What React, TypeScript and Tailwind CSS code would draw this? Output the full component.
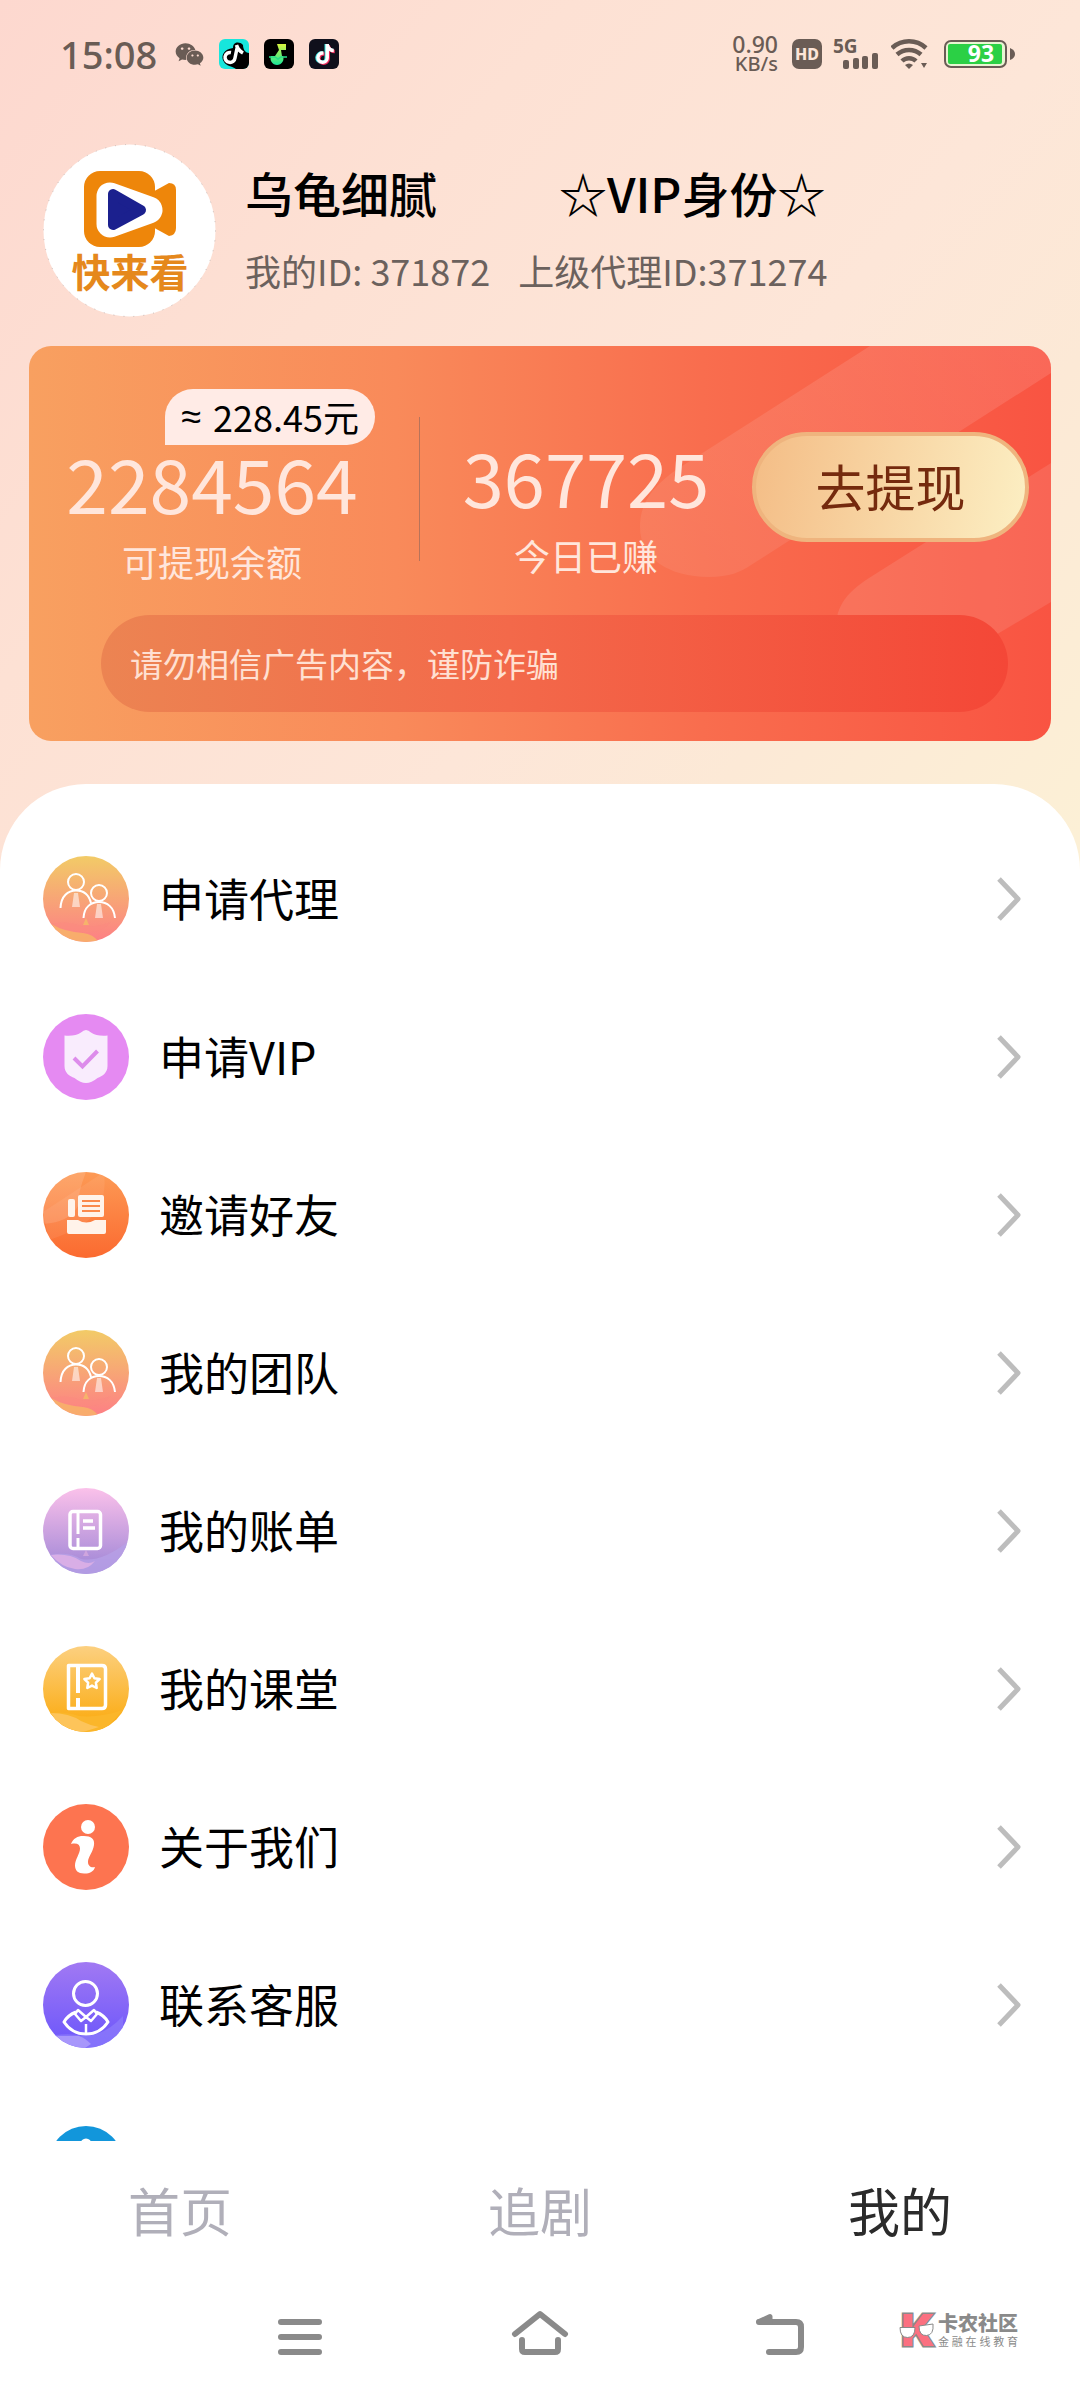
import type { ReactNode } from "react";
import { FaTiktok, FaWeixin } from "react-icons/fa";

function StatusBar() {
  return (
    <div className="flex shrink-0 items-center justify-between pt-[30px] pr-[64px] pl-[60px] text-[#6a5c55]">
      <div className="flex h-12 items-center font-['Noto_Sans','Noto_Sans_CJK_SC',sans-serif]">
        <span className="text-[38px] leading-12 font-medium">15:08</span>
        <FaWeixin className="ml-[18px] size-[29px]" />
        <svg viewBox="0 0 30 30" className="ml-[15px] size-[30px] rounded-md">
          <rect width="30" height="30" fill="#17e6dc" />
          <path
            d="M30 14C27 14 24 11 24 6 20 2 14 3 14 9 5 10 1 17 5 23c2 4 8 4 12 7h13z"
            fill="#000"
          />
          <path
            d="M17.500 6c1 4 3 6 6.500 8M18.500 7l-2.500 12a5 5 0 1 1-4-5.500"
            fill="none"
            stroke="#fff"
            strokeWidth="3.500"
          />
        </svg>
        <svg viewBox="0 0 30 30" className="ml-[15px] size-[30px]">
          <defs>
            <linearGradient id="lime" x1="0" y1="0" x2="0" y2="1">
              <stop offset="0" stopColor="#d9f53f" />
              <stop offset="1" stopColor="#19e69a" />
            </linearGradient>
          </defs>
          <rect width="30" height="30" rx="6" fill="#000" />
          <path d="M13 5h9v6h-5l1 6h1a6.500 6.500 0 1 1-12 0h4l4-6z" fill="url(#lime)" />
          <path d="M5 18h6l3 2 3-2h6" fill="none" stroke="#27e08a" strokeWidth="1.500" />
        </svg>
        <span className="relative ml-[15px] size-[30px] rounded-md bg-[#10101c]">
          <FaTiktok className="absolute top-[5px] left-[5px] size-5 text-[#35e6e3]" />
          <FaTiktok className="absolute top-[6px] left-[7px] size-5 text-[#ef2a5b]" />
          <FaTiktok className="absolute top-[5px] left-[6px] size-5 text-white" />
        </span>
      </div>
      <div className="flex h-12 items-center font-['Noto_Sans',sans-serif]">
        <div className="text-right text-[20px] leading-5 font-medium">
          <div className="text-[23px] leading-5">0.90</div>
          <div>KB/s</div>
        </div>
        <svg viewBox="0 0 30 30" className="ml-[14px] size-[30px] overflow-visible">
          <rect width="30" height="30" rx="7" fill="#6a5c55" />
          <text
            x="15"
            y="21"
            textAnchor="middle"
            fontSize="16"
            fontWeight="800"
            fill="#fde5d8"
            fontFamily="Noto Sans, sans-serif"
          >
            HD
          </text>
        </svg>
        <svg viewBox="0 0 46 30" className="ml-[11px] h-[30px] w-[46px] overflow-visible">
          <text
            x="0"
            y="14"
            fontSize="19"
            fontWeight="700"
            fill="#6a5c55"
            fontFamily="Noto Sans, sans-serif"
          >
            5G
          </text>
          <g fill="#6a5c55">
            <rect x="10" y="21" width="6" height="9" rx="2" />
            <rect x="20" y="19" width="6" height="11" rx="2" />
            <rect x="29" y="17" width="6" height="13" rx="2" />
            <rect x="39" y="14" width="6" height="16" rx="2" />
          </g>
        </svg>
        <svg viewBox="0 0 37 30" className="ml-[12px] h-[30px] w-[37px]">
          <g fill="none" stroke="#6a5c55" strokeWidth="4.500">
            <path d="M1 9a25 25 0 0 1 34 0" />
            <path d="M6 15.500a18 18 0 0 1 24 0" />
            <path d="M11 22a10 10 0 0 1 14 0" />
          </g>
          <path d="M14 26q4-3 8 0l-4 4zM30 24h6l-3 5z" fill="#6a5c55" />
        </svg>
        <svg viewBox="0 0 72 28" className="ml-[16px] h-[28px] w-[72px] overflow-visible">
          <rect x="1" y="1" width="61" height="26" rx="6" fill="#e9f5d2" stroke="#6a5c55" strokeWidth="2" />
          <rect x="4" y="4" width="54" height="20" rx="2" fill="#2bd045" />
          <path d="M66 8q5 2 5 6t-5 6z" fill="#6a5c55" />
          <text
            x="37"
            y="22"
            textAnchor="middle"
            fontSize="23"
            fontWeight="700"
            fill="#fff"
            fontFamily="Noto Sans, sans-serif"
          >
            93
          </text>
        </svg>
      </div>
    </div>
  );
}

function Avatar() {
  return (
    <svg viewBox="0 0 173 173" className="size-[173px] shrink-0" role="img" aria-label="快来看">
      <circle cx="86.5" cy="86.5" r="86" fill="#fff" stroke="#c9bcb8" strokeWidth="1" strokeDasharray="1 9" />
      <rect x="41" y="27" width="71" height="76" rx="16" fill="#ee860a" />
      <path d="M106 50l20-11q7 0 7 7v38q0 7-7 8l-20-11z" fill="#ee860a" />
      <path
        d="M67 52v28L106 66z"
        fill="#fff"
        stroke="#fff"
        strokeWidth="27"
        strokeLinejoin="round"
      />
      <path d="M70 50v31L98 66z" fill="#1b208e" stroke="#1b208e" strokeWidth="10" strokeLinejoin="round" />
      <text
        x="87"
        y="143"
        textAnchor="middle"
        fontSize="39"
        fontWeight="700"
        fill="#e5881c"
        fontFamily="Noto Sans CJK SC, sans-serif"
      >
        快来看
      </text>
    </svg>
  );
}

function Profile() {
  return (
    <div className="mt-[66px] flex shrink-0 gap-[29px] pl-[43px]">
      <Avatar />
      <div className="pt-[18px]">
        <div className="flex gap-[122px] text-[48px] leading-[60px] font-medium text-black">
          <h1>乌龟细腻</h1>
          <span>☆VIP身份☆</span>
        </div>
        <div className="mt-[26px] flex gap-7 text-[36px] leading-11 text-[#6b615d]">
          <span>我的ID: 371872</span>
          <span>上级代理ID:371274</span>
        </div>
      </div>
    </div>
  );
}

function BalanceCard() {
  return (
    <section className="relative mx-[29px] mt-[29px] shrink-0 overflow-hidden rounded-[22px] bg-[linear-gradient(90deg,#f8a060_0%,#f98a5a_36%,#f96d4e_66%,#f95442_100%)] pt-[43px] pb-[29px]">
      <svg
        viewBox="0 0 1022 395"
        preserveAspectRatio="xMaxYMin slice"
        className="absolute inset-0 size-full"
        aria-hidden="true"
      >
        <defs>
          <linearGradient id="band" x1="0" y1="1" x2="1" y2="0">
            <stop offset="0" stopColor="#fff" stopOpacity="0.07" />
            <stop offset="1" stopColor="#fff" stopOpacity="0.12" />
          </linearGradient>
        </defs>
        <path
          d="M841 0L650 122C620 142 611 160 611 181 611 212 640 231 680 231 700 231 712 226 722 219L1022 27V0z"
          fill="url(#band)"
        />
        <path d="M1022 117L840 232C815 248 806 262 806 290H965L1022 256z" fill="#fff" fillOpacity="0.1" />
      </svg>
      <div className="relative flex items-start pr-[22px] pl-5">
        <div className="flex w-[326px] flex-col items-center text-[#ffe6dc]">
          <span className="flex h-14 items-center gap-3 self-end rounded-[28px] rounded-bl-none bg-[#ffebe6] px-4 pb-0.5 text-[36px] leading-none text-black">
            <span className="font-['Noto_Sans',sans-serif]">≈</span>
            <span>228.45元</span>
          </span>
          <strong className="text-[75px] leading-[74px] font-normal">2284564</strong>
          <span className="mt-[22px] text-[36px] leading-10">可提现余额</span>
        </div>
        <div className="mt-7 ml-[44px] h-36 w-px bg-[#b8735a]" />
        <div className="flex flex-1 flex-col items-center pt-[50px] text-[#ffe6dc]">
          <strong className="text-[74px] leading-[74px] font-normal">367725</strong>
          <span className="mt-[22px] text-[36px] leading-10">今日已赚</span>
        </div>
        <button
          type="button"
          className="mt-[43px] h-[110px] w-[277px] rounded-full border-4 border-[#efb47e] bg-[linear-gradient(100deg,#f4bd86,#fcefc3)] pb-1 text-[50px] leading-none text-[#752a0e]"
        >
          去提现
        </button>
      </div>
      <p className="relative mt-[34px] mr-[43px] ml-[72px] rounded-full bg-[linear-gradient(90deg,#ec8452_0%,#f3694a_45%,#f44737_100%)] px-[29px] text-[33px] leading-[97px] text-[#ffe0d2]">
        请勿相信广告内容，谨防诈骗
      </p>
    </section>
  );
}

function Disc({ id, from, to, children }: { id: string; from: string; to: string; children: ReactNode }) {
  return (
    <svg viewBox="0 0 86 86" className="size-[86px] shrink-0" aria-hidden="true">
      <defs>
        <linearGradient id={id} x1="0" y1="0" x2="0" y2="1">
          <stop offset="0" stopColor={from} />
          <stop offset="1" stopColor={to} />
        </linearGradient>
        <clipPath id={id + "-clip"}>
          <circle cx="43" cy="43" r="43" />
        </clipPath>
      </defs>
      <g clipPath={`url(#${id}-clip)`}>
        <rect width="86" height="86" fill={`url(#${id})`} />
        {children}
      </g>
    </svg>
  );
}

function TeamIcon({ id }: { id: string }) {
  return (
    <Disc id={id} from="#f2cb67" to="#fd7f85">
      <path d="M8 68q16-4 30 2 14 2 30-4-10 12-30 10-16-2-30-8z" fill="#fb8a80" opacity=".5" />
      <path d="M8 68q14 8 32 9 10 1 16 9H20z" fill="#f7b468" opacity=".85" />
      <path d="M43 62l3 7h-6z" fill="#f6b36b" />
      <path d="M31 37h4l2 14h-8zM54 48h4l2 14h-8z" fill="#fff" opacity=".55" />
      <g fill="none" stroke="#fff" strokeWidth="2">
        <circle cx="33" cy="26" r="8" />
        <path d="M17.500 52C18 40 25 34.500 33 34.500S46 39 48 47" />
        <circle cx="56" cy="37" r="8" />
        <path d="M40.500 62C41 51 48 46 56 46s15 5 16 16" />
      </g>
    </Disc>
  );
}

function ShieldIcon() {
  return (
    <Disc id="shield" from="#e58af2" to="#e58af2">
      <path
        d="M38 18.500q5-5 10 0 6 4 16.500 3V52c0 7-5 10-10 12q-6 5-11.500 5T31.500 64c-5-2-10-5-10-12V21.500q10.500 1 16.500-3z"
        fill="#f9ecfd"
      />
      <path d="M31 44l8.500 8.500L54.500 37" fill="none" stroke="#dd8ceb" strokeWidth="4" />
    </Disc>
  );
}

function InviteIcon() {
  return (
    <Disc id="invite" from="#fd9a55" to="#fb6a30">
      <path d="M43 0q-8 20-8 34-8 16-35 18V0z" fill="#fff" opacity=".13" />
      <path d="M61 0q3 24-8 40T6 68L0 40z" fill="#fff" opacity=".07" />
      <g fill="#fff3ea">
        <rect x="25" y="27" width="7" height="18" rx="2" />
        <rect x="35" y="23" width="26" height="22" rx="2" />
        <path d="M24 48h11q8 5 17 0h11v12q0 2-2 2H26q-2 0-2-2z" />
      </g>
      <path d="M39 29h18M39 34h18M39 39h18" stroke="#fb8a4c" strokeWidth="2" />
    </Disc>
  );
}

function BillIcon() {
  return (
    <Disc id="bill" from="#fbc1ea" to="#9c84d6">
      <path d="M6 67q20-4 32 4 20 4 48-18v33H20z" fill="#b7a0e6" opacity=".8" />
      <path d="M8 67q18-2 30 6 8 4 14 0-8 10-20 8-14-2-24-14z" fill="#d9aee6" />
      <path d="M43 62l3 6h-6z" fill="#cfa5de" />
      <g fill="none" stroke="#fff" strokeWidth="3.500">
        <rect x="27" y="23.500" width="30.500" height="37" rx="3" />
        <path d="M35 24v22M35 50v11" strokeWidth="3" />
        <path d="M40 33h10M40 40h12" />
      </g>
    </Disc>
  );
}

function ClassIcon() {
  return (
    <Disc id="class" from="#fcd080" to="#fba808">
      <path d="M6 67q16-2 30 3 20 2 44-6L60 86H20z" fill="#fbb62a" />
      <path d="M8 67q18 0 30 8 8 4 18 6l-16 5H20z" fill="#fdc45a" />
      <g fill="none" stroke="#fff" strokeLinejoin="round">
        <path d="M25.500 19.500H59q3.500 0 3.500 3.500v36q0 3.500-3.500 3.500H25.500z" strokeWidth="3.500" />
        <path d="M35 20v27M35 52v10" strokeWidth="4" />
        <path
          d="M49 27.500l2.400 4.700 5.200.8-3.700 3.700.8 5.300-4.700-2.400-4.700 2.400.8-5.300-3.700-3.700 5.200-.8z"
          strokeWidth="2.500"
        />
      </g>
    </Disc>
  );
}

function AboutIcon() {
  return (
    <Disc id="about" from="#fd7450" to="#fd7450">
      <circle cx="45" cy="23" r="7" fill="#fff" />
      <path
        d="M28 40C30 34 36 31.500 41 32c7 0 11 3 10 9-1 7-6 12-6 17 0 4 3 6 7 5-1 5-7 7-11 6.500-6 0-9-3-9-8 0-6 5-12 5-17 0-4-3-6-9-4.500z"
        fill="#fff"
      />
    </Disc>
  );
}

function ServiceIcon() {
  return (
    <Disc id="service" from="#a179f3" to="#6a55fb">
      <path d="M12 73q16-2 28 1 22 0 40-20v32H20z" fill="#8f7dfb" opacity=".7" />
      <path d="M14 74h22q6 2 12 8l-6 4H24z" fill="#b7a6fb" opacity=".7" />
      <g fill="none" stroke="#fff" strokeWidth="3" strokeLinejoin="round">
        <circle cx="42.500" cy="31.500" r="12" />
        <path d="M33 50Q25 53 21 60q8 12 22 12t22-12q-4-7-12-10" />
        <path d="M35 48l-3 4 6 7 5-4-8-7zM51 48l3 4-6 7-5-4 8-7zM43 62v9" strokeWidth="2.500" />
      </g>
    </Disc>
  );
}

function SettingsIcon() {
  return (
    <svg viewBox="0 0 86 86" className="size-[86px] shrink-0" aria-hidden="true">
      <circle cx="43" cy="43" r="37" fill="#1296db" />
      <circle cx="43" cy="24" r="4" fill="none" stroke="#fff" strokeWidth="3" />
      <path d="M30 40h26v20H30z" fill="#fff" />
    </svg>
  );
}

const items: { label: string; icon: ReactNode }[] = [
  { label: "申请代理", icon: <TeamIcon id="agent" /> },
  { label: "申请VIP", icon: <ShieldIcon /> },
  { label: "邀请好友", icon: <InviteIcon /> },
  { label: "我的团队", icon: <TeamIcon id="team" /> },
  { label: "我的账单", icon: <BillIcon /> },
  { label: "我的课堂", icon: <ClassIcon /> },
  { label: "关于我们", icon: <AboutIcon /> },
  { label: "联系客服", icon: <ServiceIcon /> },
  { label: "", icon: <SettingsIcon /> },
];

function Menu() {
  return (
    <ul className="pt-9">
      {items.map((item, i) => (
        <li key={i}>
          <button
            type="button"
            aria-label={item.label || "更多"}
            className="flex h-[158px] w-full items-center pr-[58px] pl-[43px] text-left text-[45px] leading-[60px] text-black"
          >
            {item.icon}
            <span className="ml-[30px] flex-1 pb-0.5">{item.label}</span>
            <svg viewBox="0 0 26 44" className="h-11 w-[26px]" aria-hidden="true">
              <path d="M3 2l19 20L3 42" fill="none" stroke="#bdbdbd" strokeWidth="5" strokeLinejoin="round" />
            </svg>
          </button>
        </li>
      ))}
    </ul>
  );
}

function TabBar() {
  return (
    <nav className="grid h-[141px] shrink-0 grid-cols-3 pb-1 text-[52px] leading-[60px] text-[#b0afb9]">
      <button type="button">首页</button>
      <button type="button">追剧</button>
      <button type="button" aria-current="page" className="text-[#2b2b2b]">
        我的
      </button>
    </nav>
  );
}

function SystemNav() {
  return (
    <div className="relative shrink-0">
      <div className="grid h-[118px] grid-cols-3 px-[180px] pb-4">
        <button type="button" aria-label="最近任务" className="grid place-items-center">
          <svg viewBox="0 0 60 60" className="size-[60px]" fill="none" stroke="#8a8a8a" strokeWidth="6" strokeLinecap="round">
            <path d="M11 19h38M11 34h38M11 49h38" />
          </svg>
        </button>
        <button type="button" aria-label="主屏幕" className="grid place-items-center">
          <svg
            viewBox="0 0 60 60"
            className="size-[60px]"
            fill="none"
            stroke="#8a8a8a"
            strokeWidth="6"
            strokeLinecap="round"
            strokeLinejoin="round"
          >
            <path d="M5 31L30 11l25 20" />
            <path d="M12 37v9q0 3 3 3h30q3 0 3-3v-9" />
          </svg>
        </button>
        <button type="button" aria-label="返回" className="grid place-items-center">
          <svg
            viewBox="0 0 60 60"
            className="size-[60px]"
            fill="none"
            stroke="#8a8a8a"
            strokeWidth="6"
            strokeLinecap="round"
            strokeLinejoin="round"
          >
            <path d="M9 19h37q5 0 5 5v20q0 5-5 5H19" />
            <path d="M9 18.500l11-5v5z" strokeWidth="5" />
          </svg>
        </button>
      </div>
      <div className="absolute top-[29px] right-[62px] flex items-center gap-[3px] text-[#8a8a8a]">
        <svg viewBox="0 0 36 38" className="h-[38px] w-9 overflow-visible" aria-hidden="true">
          <text
            x="19"
            y="35"
            textAnchor="middle"
            fontSize="44"
            fontWeight="900"
            fontFamily="Inter, sans-serif"
            fill="#fb7080"
            stroke="#8a8a8a"
            strokeWidth="3"
            paintOrder="stroke"
          >
            K
          </text>
          <path
            d="M1 16.500h15q0 10-7.500 10T1 16.500zM20 15l14-2q1 11-6.500 11.500T20 15z"
            fill="#fff"
            stroke="#8a8a8a"
            strokeWidth="1"
          />
        </svg>
        <div>
          <div className="text-[20px] leading-[22px] font-black">卡农社区</div>
          <div className="flex justify-between text-[11px] leading-[14px]">
            {Array.from("金融在线教育").map((c) => (
              <span key={c}>{c}</span>
            ))}
          </div>
        </div>
      </div>
    </div>
  );
}

export default function App() {
  return (
    <div className="flex h-dvh flex-col overflow-hidden bg-white font-['Noto_Sans_CJK_SC',sans-serif]">
      <main className="flex min-h-0 flex-1 flex-col overflow-hidden bg-[linear-gradient(130deg,#fdd8cf_0%,#fde1d4_20%,#fde6d8_38%,#fce9d6_48%,#fcf0d6_62%)]">
        <StatusBar />
        <Profile />
        <BalanceCard />
        <div className="mt-[43px] shrink-0 rounded-t-[86px] bg-white">
          <Menu />
        </div>
      </main>
      <TabBar />
      <SystemNav />
    </div>
  );
}
